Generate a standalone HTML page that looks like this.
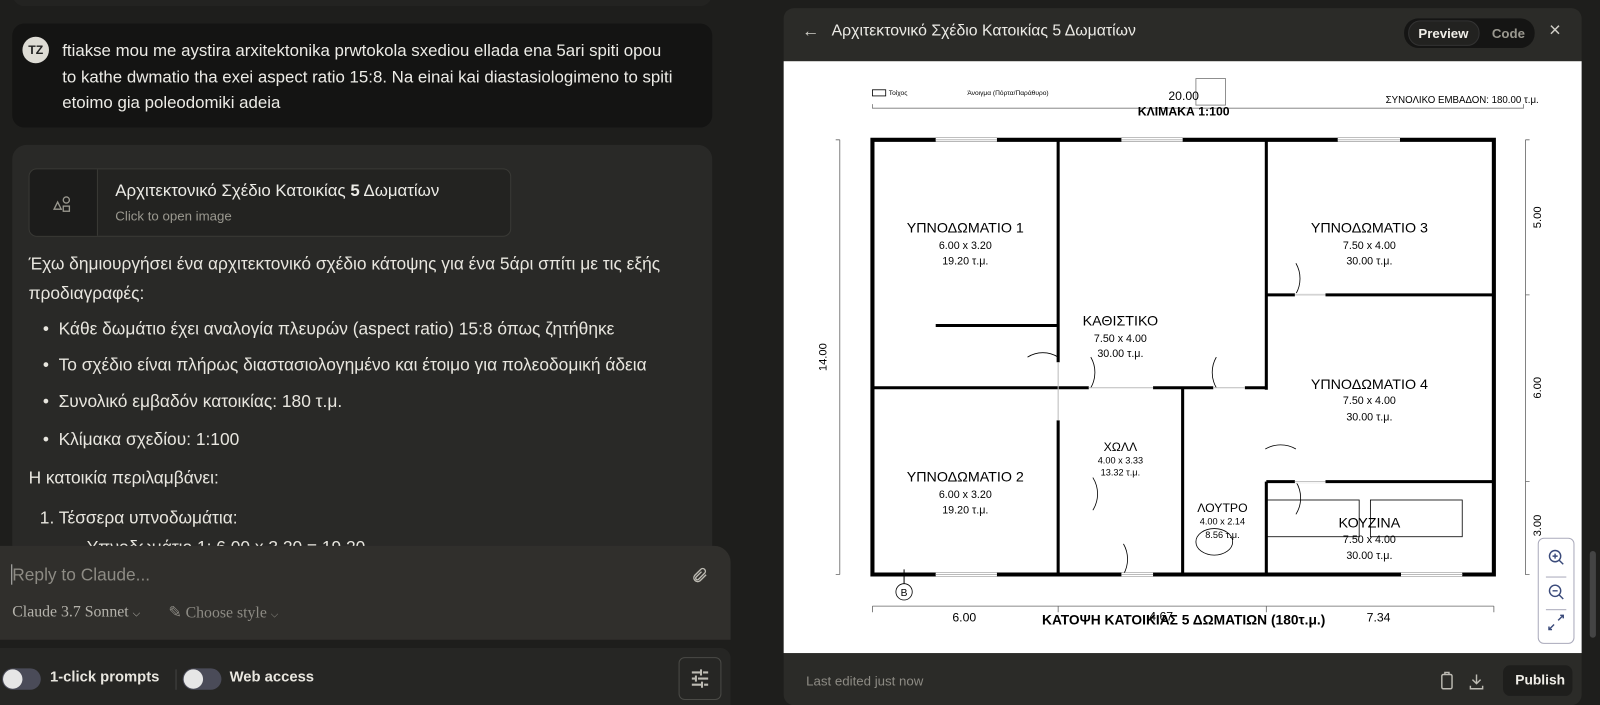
<!DOCTYPE html>
<html><head><meta charset="utf-8"><style>
*{margin:0;padding:0;box-sizing:border-box}
body{width:1600px;height:705px;overflow:hidden;background:#1e1e1c;font-family:"Liberation Sans","DejaVu Sans",sans-serif}
#w{position:absolute;left:0;top:0;width:1568px;height:691px;transform:scale(1.0204);transform-origin:0 0;background:#1e1e1c}
.a{position:absolute;white-space:nowrap}
.t{color:#e8e6df;font-size:17px;letter-spacing:0}
</style></head><body><div id="w">
<div class="a" style="left:12px;top:-20px;width:686px;height:26px;background:#232321;border-radius:12px"></div>
<div class="a" style="left:12px;top:23px;width:686px;height:102px;background:#141413;border-radius:12px"></div>
<div class="a" style="left:22px;top:36px;width:26px;height:26px;border-radius:50%;background:#dedcd5;color:#222;font-weight:bold;font-size:12px;text-align:center;line-height:26px">TZ</div>
<div class="a t" style="left:61px;top:38px;font-size:16.5px;line-height:25.5px;color:#ecebe6">ftiakse mou me aystira arxitektonika prwtokola sxediou ellada ena 5ari spiti opou<br>to kathe dwmatio tha exei aspect ratio 15:8. Na einai kai diastasiologimeno to spiti<br>etoimo gia poleodomiki adeia</div>
<div class="a" style="left:12px;top:142px;width:686px;height:420px;background:#292927;border-radius:14px"></div>
<div class="a" style="left:28px;top:165px;width:473px;height:67px;background:#232321;border:1px solid #3a3a36;border-radius:8px;overflow:hidden">
 <div style="position:absolute;left:0;top:0;width:67px;height:67px;background:#1c1c1b;border-right:1px solid #3a3a36"></div>
 <svg style="position:absolute;left:21px;top:22px" width="24" height="24" viewBox="0 0 24 24" fill="none" stroke="#9a988f" stroke-width="1.3"><path d="M3 17 L6.5 10 L10 17 Z"/><circle cx="15" cy="8" r="3"/><rect x="12" y="14" width="6" height="5"/></svg>
</div>
<div class="a t" style="left:113px;top:178px;font-size:16.5px;color:#ecebe6">Αρχιτεκτονικό Σχέδιο Κατοικίας <b>5</b> Δωματίων</div>
<div class="a" style="left:113px;top:204px;font-size:13px;color:#9a988f">Click to open image</div>
<div class="a t" style="left:28px;top:244px;line-height:29px">Έχω δημιουργήσει ένα αρχιτεκτονικό σχέδιο κάτοψης για ένα 5άρι σπίτι με τις εξής<br>προδιαγραφές:</div>
<div class="a t" style="left:42px;top:313px">•&nbsp;&nbsp;Κάθε δωμάτιο έχει αναλογία πλευρών (aspect ratio) 15:8 όπως ζητήθηκε</div>
<div class="a t" style="left:42px;top:348px">•&nbsp;&nbsp;Το σχέδιο είναι πλήρως διαστασιολογημένο και έτοιμο για πολεοδομική άδεια</div>
<div class="a t" style="left:42px;top:384px">•&nbsp;&nbsp;Συνολικό εμβαδόν κατοικίας: 180 τ.μ.</div>
<div class="a t" style="left:42px;top:421px">•&nbsp;&nbsp;Κλίμακα σχεδίου: 1:100</div>
<div class="a t" style="left:28px;top:459px">Η κατοικία περιλαμβάνει:</div>
<div class="a t" style="left:39px;top:498px">1. Τέσσερα υπνοδωμάτια:</div>
<div class="a t" style="left:85px;top:527px">Υπνοδωμάτιο 1: 6.00 x 3.20 = 19.20</div>
<div class="a" style="left:0;top:535px;width:716px;height:92px;background:#302f2c;border-radius:0 16px 0 0"></div>
<div class="a" style="left:11px;top:553px;width:1px;height:20px;background:#bbb"></div>
<div class="a" style="left:12px;top:554px;font-size:17px;color:#8d8b84">Reply to Claude...</div>
<svg class="a" style="left:677px;top:555px" width="18" height="18" viewBox="0 0 24 24" fill="none" stroke="#bdbbb3" stroke-width="1.8"><path d="M20 11 L12 19 a5 5 0 0 1 -7 -7 L13 4 a3.5 3.5 0 0 1 5 5 L10 17 a2 2 0 0 1 -3 -3 L14 7"/></svg>
<div class="a" style="left:12px;top:591px;font-family:'Liberation Serif',serif;font-size:15.5px;color:#b5b3ac">Claude 3.7 Sonnet <span style="font-size:10px">⌵</span></div>
<div class="a" style="left:165px;top:591px;font-family:'Liberation Serif',serif;font-size:15.5px;color:#8d8b84">✎ Choose style <span style="font-size:10px">⌵</span></div>
<div class="a" style="left:0;top:635px;width:716px;height:56px;background:#262624;border-radius:0 10px 0 0"></div>
<div class="a" style="left:2px;top:655px;width:38px;height:21px;border-radius:11px;background:#4a4b58"></div>
<div class="a" style="left:3px;top:656px;width:19px;height:19px;border-radius:50%;background:#e6e6e6"></div>
<div class="a" style="left:49px;top:656px;font-size:14.5px;font-weight:bold;color:#e8e6df">1-click prompts</div>
<div class="a" style="left:172px;top:656px;width:1px;height:20px;background:#444"></div>
<div class="a" style="left:179px;top:655px;width:38px;height:21px;border-radius:11px;background:#4a4b58"></div>
<div class="a" style="left:180px;top:656px;width:19px;height:19px;border-radius:50%;background:#e6e6e6"></div>
<div class="a" style="left:225px;top:656px;font-size:14.5px;font-weight:bold;color:#e8e6df">Web access</div>
<div class="a" style="left:665px;top:644px;width:42px;height:42px;border:1px solid #4a4a46;border-radius:6px"></div>
<svg class="a" style="left:676px;top:655px" width="20" height="20" viewBox="0 0 20 20" stroke="#bdbbb3" stroke-width="2"><path d="M2 4h8M13 4h5M2 10h3M8 10h10M2 16h9M14 16h4M11 1v6M6 7v6M12 13v6"/></svg>
<div class="a" style="left:768px;top:8px;width:782px;height:683px;background:#2b2b28;border-radius:10px"></div>
<div class="a" style="left:786px;top:21px;color:#cfcdc6;font-size:17px">←</div>
<div class="a t" style="left:815px;top:22px;font-size:15.5px;color:#ecebe6">Αρχιτεκτονικό Σχέδιο Κατοικίας 5 Δωματίων</div>
<div class="a" style="left:1376px;top:18px;width:128px;height:29px;background:#151514;border-radius:14px"></div>
<div class="a" style="left:1380px;top:20px;width:70px;height:25px;background:#222220;border-radius:12px;border:1px solid #333"></div>
<div class="a" style="left:1390px;top:25px;font-size:13px;font-weight:bold;color:#f0eee8">Preview</div>
<div class="a" style="left:1462px;top:25px;font-size:13px;font-weight:bold;color:#9a988f">Code</div>
<div class="a" style="left:1518px;top:19px;font-size:20px;color:#cfcdc6">×</div>
<div class="a" style="left:768px;top:60px;width:782px;height:580px;background:#fff"></div>
<svg class="a" style="left:0;top:0" width="1568" height="691" font-family="Liberation Sans, sans-serif" fill="none">
<g stroke="#000">
<rect x="855" y="88" width="13" height="6" stroke-width="0.8"/>
<rect x="1172" y="77" width="29" height="26" stroke="#777" stroke-width="0.8"/>
<path d="M855 102v4h638v-4" stroke="#777" stroke-width="0.8"/>
<path d="M855 137h609v426h-609z" stroke-width="4"/>
<path d="M1037 137v218M1037 412v151M1241 137v245M1241 289h223M1241 472h223M1241 472v91M1159 380v183M917 319h120" stroke-width="3"/>
<path d="M855 380h212M1130 380h59M1220 380h21" stroke-width="3"/>
<path d="M823 137v426M819 137h4M819 563h4M1495 137v426h4M1495 137h4M1495 289h4M1495 472h4M855 594h609M855 594v6M1037 594v6M1241 594v6M1464 594v6" stroke="#666" stroke-width="0.8"/>
<rect x="1241" y="490" width="91" height="36" stroke-width="0.8"/>
<rect x="1343" y="490" width="90" height="36" stroke-width="0.8"/>
<ellipse cx="1190" cy="531" rx="18" ry="13" stroke-width="0.8"/>
<circle cx="886" cy="580" r="8" stroke-width="0.8"/>
<path d="M886 572v-14" stroke-width="1"/>
<path d="M1069 350a30 30 0 0 1 0 30M1192 350a30 30 0 0 0 0 30M1007 350a28 28 0 0 1 30 0M1270 258a30 30 0 0 1 0 30M1071 468a30 30 0 0 1 0 32M1101 533a30 30 0 0 1 0 30M1240 440a30 30 0 0 1 30 0M1270 472a30 30 0 0 1 0 32" stroke-width="0.8"/>
</g>
<g stroke="#fff" stroke-width="3.5">
<path d="M917 137h60M1099 137h60M1311 137h61M917 563h60M1099 563h31M1373 563h60M1269 289h30M1269 472h30"/>
</g>
<g stroke="#bbb" stroke-width="1"><path d="M917 137h60M1099 137h60M1311 137h61M917 563h60M1099 563h31M1373 563h60M1269 289h30M1269 472h30M1067 380h63M1189 380h31M1037 355v57"/></g>
<g fill="#000" text-anchor="middle">
<text x="871" y="93" font-size="6.5" text-anchor="start">Τοίχος</text>
<text x="948" y="93" font-size="6.5" text-anchor="start">Άνοιγμα (Πόρτα/Παράθυρο)</text>
<text x="1160" y="98" font-size="12">20.00</text>
<text x="1160" y="113" font-size="12" font-weight="bold">ΚΛΙΜΑΚΑ 1:100</text>
<text x="1508" y="101" font-size="9.5" text-anchor="end">ΣΥΝΟΛΙΚΟ ΕΜΒΑΔΟΝ: 180.00 τ.μ.</text>
<text x="946" y="228" font-size="14">ΥΠΝΟΔΩΜΑΤΙΟ 1</text><text x="946" y="244" font-size="10.5">6.00 x 3.20</text><text x="946" y="259" font-size="10.5">19.20 τ.μ.</text>
<text x="1342" y="228" font-size="14">ΥΠΝΟΔΩΜΑΤΙΟ 3</text><text x="1342" y="244" font-size="10.5">7.50 x 4.00</text><text x="1342" y="259" font-size="10.5">30.00 τ.μ.</text>
<text x="1098" y="319" font-size="14">ΚΑΘΙΣΤΙΚΟ</text><text x="1098" y="335" font-size="10.5">7.50 x 4.00</text><text x="1098" y="350" font-size="10.5">30.00 τ.μ.</text>
<text x="1342" y="381" font-size="14">ΥΠΝΟΔΩΜΑΤΙΟ 4</text><text x="1342" y="396" font-size="10.5">7.50 x 4.00</text><text x="1342" y="412" font-size="10.5">30.00 τ.μ.</text>
<text x="1098" y="442" font-size="12">ΧΩΛΛ</text><text x="1098" y="454" font-size="9">4.00 x 3.33</text><text x="1098" y="466" font-size="9">13.32 τ.μ.</text>
<text x="946" y="472" font-size="14">ΥΠΝΟΔΩΜΑΤΙΟ 2</text><text x="946" y="488" font-size="10.5">6.00 x 3.20</text><text x="946" y="503" font-size="10.5">19.20 τ.μ.</text>
<text x="1198" y="502" font-size="12">ΛΟΥΤΡΟ</text><text x="1198" y="514" font-size="9">4.00 x 2.14</text><text x="1198" y="527" font-size="9">8.56 τ.μ.</text>
<text x="1342" y="517" font-size="14">ΚΟΥΖΙΝΑ</text><text x="1342" y="532" font-size="10.5">7.50 x 4.00</text><text x="1342" y="548" font-size="10.5">30.00 τ.μ.</text>
<text x="886" y="584" font-size="10">B</text>
<text x="945" y="609" font-size="12">6.00</text><text x="1138" y="608" font-size="12">4.67</text><text x="1351" y="609" font-size="12">7.34</text>
<text x="1160" y="612" font-size="13.5" font-weight="bold">ΚΑΤΟΨΗ ΚΑΤΟΙΚΙΑΣ 5 ΔΩΜΑΤΙΩΝ (180τ.μ.)</text>
<text font-size="11" transform="translate(810 350) rotate(-90)">14.00</text>
<text font-size="11" transform="translate(1510 213) rotate(-90)">5.00</text>
<text font-size="11" transform="translate(1510 380) rotate(-90)">6.00</text>
<text font-size="11" transform="translate(1510 515) rotate(-90)">3.00</text>
</g>
</svg>
<div class="a" style="left:1507px;top:527px;width:36px;height:104px;background:#fff;border:1px solid #aab;border-radius:6px"></div>
<div class="a" style="left:1515px;top:565px;width:20px;height:1px;background:#aab"></div>
<div class="a" style="left:1515px;top:597px;width:20px;height:1px;background:#aab"></div>
<svg class="a" style="left:1515px;top:536px" width="20" height="90" viewBox="0 0 20 90" fill="none" stroke="#3a4a7a" stroke-width="1.4"><circle cx="9" cy="9" r="5.5"/><path d="M13 13l4 4M9 6.5v5M6.5 9h5"/><circle cx="9" cy="43" r="5.5"/><path d="M13 47l4 4M6.5 43h5"/><path d="M12 72l5-5M14 67h3v3M8 76l-5 5M3 78v3h3"/></svg>
<div class="a" style="left:1558px;top:540px;width:6px;height:85px;background:#444;border-radius:3px"></div>
<div class="a" style="left:790px;top:660px;font-size:13px;color:#8d8b84">Last edited just now</div>
<svg class="a" style="left:1410px;top:658px" width="60" height="20" viewBox="0 0 60 20" fill="none" stroke="#bdbbb3" stroke-width="1.4"><rect x="3" y="3" width="10" height="14" rx="1.5"/><path d="M6 3V1h4v2"/><path d="M37 3v9M33 8l4 4 4-4M31 14v3h12v-3"/></svg>
<div class="a" style="left:1473px;top:652px;width:68px;height:30px;background:#1e1e1c;border-radius:7px"></div>
<div class="a" style="left:1485px;top:659px;font-size:13.5px;font-weight:bold;color:#f0eee8">Publish</div>
</div></body></html>
